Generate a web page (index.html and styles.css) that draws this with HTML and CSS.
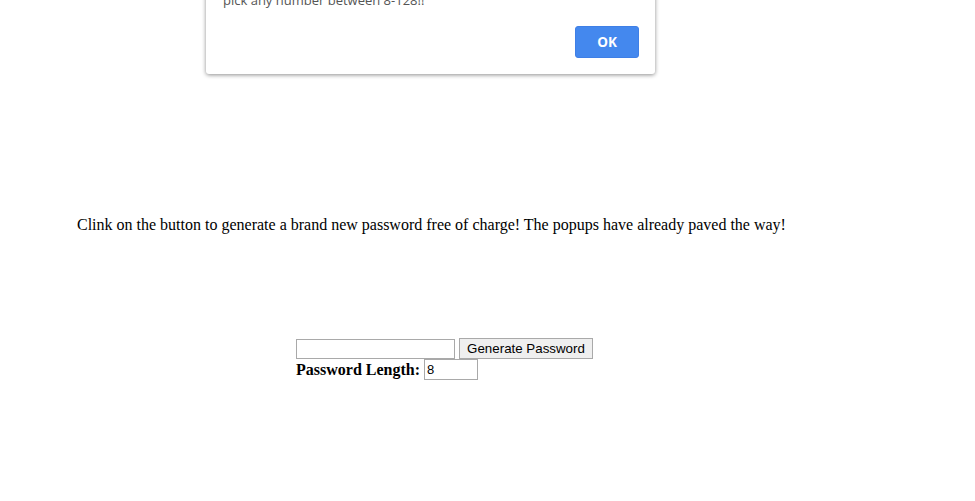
FILE: index.html
```html
<!DOCTYPE html>
<html>
<head>
<meta charset="utf-8">
<link rel="stylesheet" href="styles.css">
</head>
<body>
<div class="dialog">
  <div class="msg">pick any number between 8-128!!</div>
  <div class="actions"><button class="ok">OK</button></div>
</div>
<main class="page">
  <p class="intro">Clink on the button to generate a brand new password free of charge! The popups have already paved the way!</p>
  <div class="form">
    <div class="row">
      <input class="pw" type="text"><button class="gen">Generate Password</button>
    </div>
    <div class="row">
      <label class="lbl">Password Length:</label> <input class="len" type="text" value="8">
    </div>
  </div>
</main>
</body>
</html>
```
FILE: styles.css
```css
html, body {
  margin: 0;
  padding: 0;
  background: #fff;
}
body {
  font-family: "Liberation Serif", "Times New Roman", serif;
  font-size: 16px;
  color: #000;
}
.dialog {
  position: absolute;
  left: 206px;
  top: -20px;
  width: 449px;
  height: 94px;
  box-sizing: border-box;
  background: #fff;
  border-radius: 0 0 3px 3px;
  box-shadow: 0 1px 4px rgba(0,0,0,0.45);
  font-family: "Open Sans", "Noto Sans", sans-serif;
  display: flex;
  flex-direction: column;
}
.msg {
  padding: 11px 0 0 17px;
  font-size: 13px;
  color: #555;
  line-height: 18px;
}
.actions {
  display: flex;
  justify-content: flex-end;
  padding: 0 16px 16px 0;
  margin-top: auto;
}
.ok {
  width: 64px;
  height: 32px;
  border: 1px solid #3f7fe6;
  border-radius: 3px;
  background: #4488ee;
  color: #fff;
  font-family: "Open Sans", "Noto Sans", sans-serif;
  font-weight: 700;
  font-size: 13.5px;
  padding: 0;
}
.page {
  padding: 216px 0 0 77px;
}
.intro {
  margin: 0;
  line-height: 17px;
}
.form {
  margin: 105px 0 0 219px;
}
.row {
  display: flex;
  align-items: center;
  height: 21px;
}
.pw {
  width: 159px;
  height: 20px;
  box-sizing: border-box;
  border: 1px solid #a9a9a9;
  padding: 1px 2px;
  margin: 0 4px 0 0;
  font-size: 13px;
}
.gen {
  height: 21px;
  box-sizing: border-box;
  border: 1px solid #a9a9a9;
  background: #efefef;
  font-family: "Liberation Sans", Arial, sans-serif;
  font-size: 13.33px;
  padding: 0;
  color: #000;
  width: 134px;
  white-space: nowrap;
}
.lbl {
  font-weight: 700;
  font-size: 16px;
  margin-right: 4px;
}
.len {
  width: 54px;
  height: 21px;
  box-sizing: border-box;
  border: 1px solid #a9a9a9;
  padding: 1px 2px;
  margin: 0;
  font-family: "Liberation Sans", Arial, sans-serif;
  font-size: 13px;
}
```
